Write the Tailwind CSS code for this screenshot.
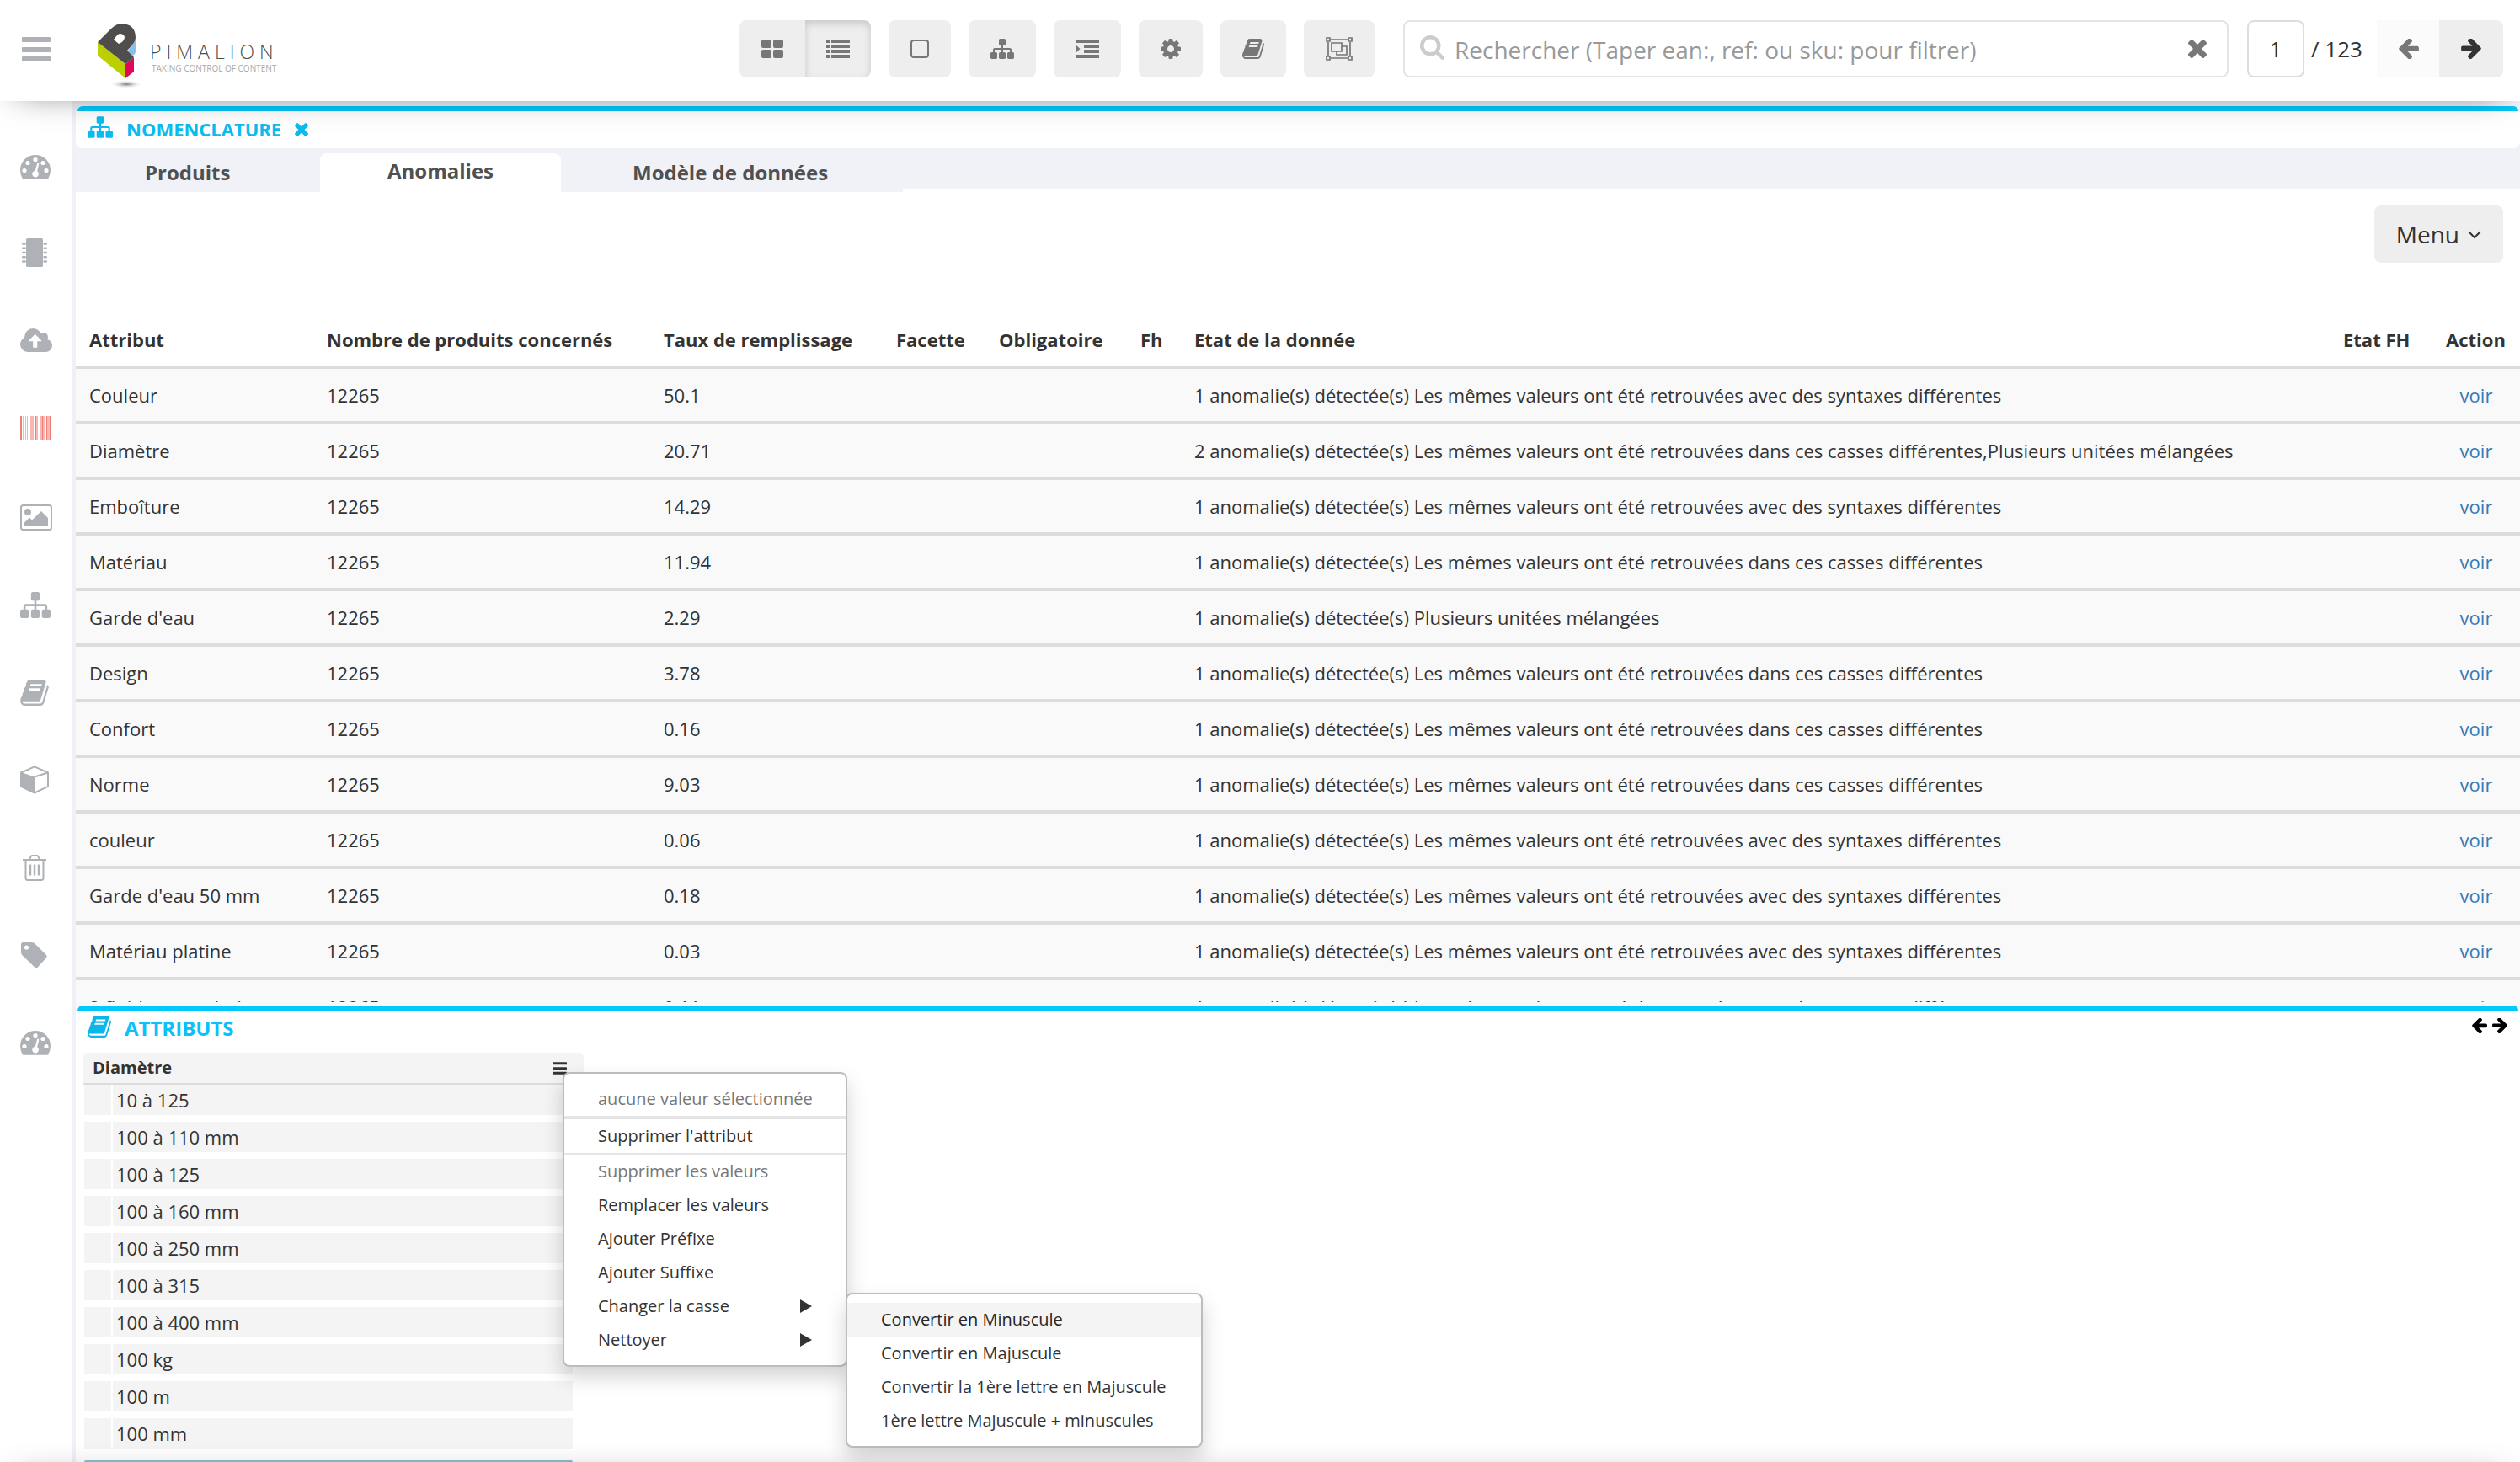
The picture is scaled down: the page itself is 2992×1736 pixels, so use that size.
<!DOCTYPE html>
<html lang="fr">
  <head>
    <meta charset="UTF-8" />
    <meta name="viewport" content="width=device-width, initial-scale=1.0" />
    <title>Pimalion - Nomenclature</title>
    <script src="https://cdn.jsdelivr.net/npm/@tailwindcss/browser@4"></script>
  </head>
  <body class="bg-white font-['Open_Sans','Noto_Sans',sans-serif] text-[22px] text-[#333]">
    <!-- icons -->
    <svg class="hidden">
      <symbol id="i-bars" viewBox="0 0 34 29">
        <rect width="34" height="6" rx="1" />
        <rect y="12" width="34" height="6" rx="1" />
        <rect y="23" width="34" height="6" rx="1" />
      </symbol>
      <symbol id="i-sitemap" viewBox="0 128 1792 1536">
        <path d="M1792 1248v320q0 40-28 68t-68 28h-320q-40 0-68-28t-28-68v-320q0-40 28-68t68-28h96v-192h-512v192h96q40 0 68 28t28 68v320q0 40-28 68t-68 28h-320q-40 0-68-28t-28-68v-320q0-40 28-68t68-28h96v-192h-512v192h96q40 0 68 28t28 68v320q0 40-28 68t-68 28h-320q-40 0-68-28t-28-68v-320q0-40 28-68t68-28h96v-192q0-52 38-90t90-38h512v-192h-96q-40 0-68-28t-28-68v-320q0-40 28-68t68-28h320q40 0 68 28t28 68v320q0 40-28 68t-68 28h-96v192h512q52 0 90 38t38 90v192h96q40 0 68 28t28 68z" />
      </symbol>
      <symbol id="i-book" viewBox="64 128 1666 1536">
        <path d="M1703 478q40 57 18 129l-275 906q-19 64-76.5 107.5t-122.5 43.5h-923q-77 0-148.5-53.5t-99.5-131.5q-24-67-2-127 0-4 3-27t4-37q1-8-3-21.5t-3-19.5q2-11 8-21t16.5-23.5 16.5-23.5q23-38 45-91.5t30-91.5q3-10 .5-30t-.5-28q3-11 17-28t17-23q21-36 42-92t25-90q1-9-2.5-32t.5-28q4-13 22-30.5t22-22.5q19-26 42.5-84.5t27.5-96.5q1-8-3-25.5t-2-26.5q2-8 9-18t18-23 17-21q8-12 16.5-30.5t15-35 16-36 19.5-32 26.5-23.5 36-11.5 47.5 5.5l-1 3q38-9 51-9h761q74 0 114 56t18 130l-274 906q-36 119-71.5 153.5t-128.5 34.5h-869q-27 0-38 15-11 16-1 43 24 70 144 70h923q29 0 56-15.5t35-41.5l300-987q7-22 5-57 38 15 59 43zm-1064 2q-4 13 2 22.5t20 9.5h608q13 0 25.5-9.5t16.5-22.5l21-64q4-13-2-22.5t-20-9.5h-608q-13 0-25.5 9.5t-16.5 22.5zm-83 256q-4 13 2 22.5t20 9.5h608q13 0 25.5-9.5t16.5-22.5l21-64q4-13-2-22.5t-20-9.5h-608q-13 0-25.5 9.5t-16.5 22.5z" />
      </symbol>
      <symbol id="i-times" viewBox="302 366 1188 1188">
        <path d="M1490 1322q0 40-28 68l-136 136q-28 28-68 28t-68-28l-294-294-294 294q-28 28-68 28t-68-28l-136-136q-28-28-28-68t28-68l294-294-294-294q-28-28-28-68t28-68l136-136q28-28 68-28t68 28l294 294 294-294q28-28 68-28t68 28l136 136q28 28 28 68t-28 68l-294 294 294 294q28 28 28 68z" />
      </symbol>
      <symbol id="i-left" viewBox="180 220 1490 1490">
        <path d="M1664 896v128q0 53-32.5 90.5t-84.5 37.5h-704l293 294q38 36 38 90t-38 90l-75 76q-37 37-90 37-52 0-91-37l-651-652q-37-37-37-90 0-52 37-91l651-650q38-38 91-38 52 0 90 38l75 74q38 38 38 91t-38 91l-293 293h704q52 0 84.5 37.5t32.5 90.5z" />
      </symbol>
      <symbol id="i-right" viewBox="120 240 1490 1490">
        <path d="M1600 960q0 54-37 91l-651 651q-39 37-91 37-51 0-90-37l-75-75q-38-38-38-91t38-91l293-293h-704q-52 0-84.5-37.5t-32.5-90.5v-128q0-53 32.5-90.5t84.5-37.5h704l-293-294q-38-36-38-90t38-90l75-75q38-38 90-38 53 0 91 38l651 651q37 35 37 90z" />
      </symbol>
      <symbol id="i-cog" viewBox="128 128 1536 1536">
        <path d="M1152 896q0-106-75-181t-181-75-181 75-75 181 75 181 181 75 181-75 75-181zm512-109v222q0 12-8 23t-20 13l-185 28q-19 54-39 91 35 50 107 138 10 12 10 25t-9 23q-27 37-99 108t-94 71q-12 0-26-9l-138-108q-44 23-91 38-16 136-29 186-7 28-36 28h-222q-14 0-24.5-8.5t-11.5-21.5l-28-184q-49-16-90-37l-141 107q-10 9-25 9-14 0-25-11-126-114-165-168-7-10-7-23 0-12 8-23 15-21 51-66.5t54-70.5q-27-50-41-99l-183-27q-13-2-21-12.5t-8-23.5v-222q0-12 8-23t19-13l186-28q14-46 39-92-40-57-107-138-10-12-10-24 0-10 9-23 26-36 98.5-107.5t94.5-71.5q13 0 26 10l138 107q44-23 91-38 16-136 29-186 7-28 36-28h222q14 0 24.5 8.5t11.5 21.5l28 184q49 16 90 37l142-107q9-9 24-9 13 0 25 10 129 119 165 170 7 8 7 22 0 12-8 23-15 21-51 66.5t-54 70.5q26 50 41 98l183 28q13 2 21 12.5t8 23.5z" />
      </symbol>
      <symbol id="i-search" viewBox="64 128 1664 1664">
        <path d="M1216 832q0-185-131.5-316.5t-316.5-131.5-316.5 131.5-131.5 316.5 131.5 316.5 316.5 131.5 316.5-131.5 131.5-316.5zm512 832q0 52-38 90t-90 38q-54 0-90-38l-343-342q-179 124-399 124-143 0-273.5-55.5t-225-150-150-225-55.5-273.5 55.5-273.5 150-225 225-150 273.5-55.5 273.5 55.5 225 150 150 225 55.5 273.5q0 220-124 399l343 343q37 37 37 90z" />
      </symbol>
      <symbol id="i-cloud" viewBox="0 128 1920 1408">
        <path d="M1280 864q0-14-9-23l-352-352q-9-9-23-9t-23 9l-351 351q-10 12-10 24 0 14 9 23t23 9h224v352q0 13 9.5 22.5t22.5 9.5h192q13 0 22.5-9.5t9.5-22.5v-352h224q13 0 22.5-9.5t9.5-22.5zm640 288q0 159-112.5 271.5t-271.5 112.5h-1088q-185 0-316.5-131.5t-131.5-316.5q0-130 70-240t188-165q-2-30-2-43 0-212 150-362t362-150q156 0 285.5 87t188.5 231q71-62 166-62 106 0 181 75t75 181q0 76-41 138 130 31 213.5 135.5t83.5 238.5z" />
      </symbol>
      <symbol id="i-gauge" viewBox="0 0 36 29">
        <path d="M18 0a18 18 0 0 1 18 18q0 5.500-2.700 10-.5.700-1.500.700H4.200q-1 0-1.500-.7Q0 23.500 0 18A18 18 0 0 1 18 0z" />
        <g fill="#fff">
          <circle cx="5" cy="18.500" r="2.600" />
          <circle cx="9" cy="9.500" r="2.600" />
          <circle cx="18" cy="5.500" r="2.600" />
          <circle cx="27" cy="9.500" r="2.600" />
          <circle cx="31" cy="18.500" r="2.600" />
          <path d="M20 10.500q.3-1.200 1.400-.9t.8 1.500l-2 8.200a3.900 3.900 0 1 1-2.400-.6z" />
        </g>
      </symbol>
      <symbol id="i-chip" viewBox="0 0 30 34">
        <rect x="5" width="20" height="34" rx="1.500" />
        <g stroke="currentColor" stroke-width="2.400" stroke-linecap="round">
          <path d="M1.200 6.500h2.500M1.200 11.700h2.500M1.200 17h2.500M1.200 22.200h2.500M1.200 27.500h2.500M26.600 6.500h2.200M26.600 11.700h2.200M26.600 17h2.200M26.600 22.200h2.200M26.600 27.500h2.200" />
        </g>
      </symbol>
      <symbol id="i-barcode" viewBox="0 0 36 28">
        <path opacity=".9" d="M0 0h2v28H0zM10 0h1v28h-1zM18 0h1v28h-1zM23 0h1v28h-1zM26 0h1v28h-1zM31 0h1v28h-1zM35 0h1v28h-1z" />
        <path opacity=".5" d="M3 0h1v28H3zM6 0h1v28H6zM8 0h1v28H8zM12 0h4v28h-4zM19 0h2v28h-2zM24 0h2v28h-2zM27 0h3v28h-3zM32 0h3v28h-3z" />
      </symbol>
      <symbol id="i-picture" viewBox="0 0 38 31">
        <rect x="1" y="1" width="36" height="29" rx="2.500" fill="none" stroke="currentColor" stroke-width="2" />
        <circle cx="9" cy="9" r="4" />
        <path d="M5 26v-4.500l6-6 3 3L25 8l8 8v10z" />
      </symbol>
      <symbol id="i-cube" viewBox="0 0 34 34">
        <path d="M1 8.500 17 1.300l16 7.200v16.300L17 32.500 1 24.800z" fill="none" stroke="currentColor" stroke-width="2" stroke-linejoin="round" />
        <path d="M1 8l16.800 5.700V33.500L1 25.500z" />
        <path d="M17 13.500 33 8.500" stroke="currentColor" stroke-width="2" />
      </symbol>
      <symbol id="i-trash" viewBox="0 0 28 31">
        <g fill="none" stroke="currentColor" stroke-width="2">
          <path d="M0 6h28M8 6l1.500-3.800Q10 1 11.200 1h5.600q1.200 0 1.700 1.200L20 6M3.500 6v21.500Q3.500 30 6 30h16q2.500 0 2.500-2.500V6" />
          <path d="M9 11.500v13M14 11.500v13M19 11.500v13" stroke-width="2.400" />
        </g>
      </symbol>
      <symbol id="i-tag" viewBox="0 0 31 31">
        <path fill-rule="evenodd" d="M2.500 0h10.300q2 0 3.700 1.500L30 15q1.300 1.600 0 3.200L19.600 29.800q-1.600 1.400-3.200 0L1.700 15.500Q0 13.800 0 11.800V2.500Q0 0 2.500 0zM6.500 3.500a2.600 2.600 0 1 0 0 5.200 2.600 2.600 0 0 0 0-5.200z" />
      </symbol>
      <symbol id="i-th" viewBox="0 0 26 22">
        <rect width="12" height="10" rx="2" /><rect x="14" width="12" height="10" rx="2" />
        <rect y="12" width="12" height="10" rx="2" /><rect x="14" y="12" width="12" height="10" rx="2" />
      </symbol>
      <symbol id="i-list" viewBox="0 0 28 22">
        <path d="M0 0h4v4H0zM6 0h22v4H6zM0 6h4v4H0zM6 6h22v4H6zM0 12h4v4H0zM6 12h22v4H6zM0 18h4v4H0zM6 18h22v4H6z" />
      </symbol>
      <symbol id="i-square" viewBox="0 0 22 22">
        <rect x="1" y="1" width="20" height="20" rx="3" fill="none" stroke="currentColor" stroke-width="2" />
      </symbol>
      <symbol id="i-indent" viewBox="0 0 28 22">
        <path d="M0 0h28v4H0zM10 6h18v4H10zM10 12h18v4H10zM0 18h28v4H0zM0 6l5.500 5L0 16z" />
      </symbol>
      <symbol id="i-group" viewBox="0 0 32 28">
        <g fill="none" stroke="currentColor" stroke-width="1.700">
          <path d="M6 3h20M6 25h20M3 6v16M29 6v16" />
          <path d="M1 1h4v4H1zM27 1h4v4h-4zM1 23h4v4H1zM27 23h4v4h-4z" />
          <path d="M7 7h12v10H7zM19 11h6v10H13v-4" />
        </g>
      </symbol>
      <symbol id="i-play" viewBox="0 0 14 16"><path d="M0 0l14 8-14 8z" /></symbol>
    </svg>

    <div class="flex h-screen flex-col overflow-hidden">
      <!-- header -->
      <header class="relative z-20 flex h-[120px] shrink-0 items-start bg-white pt-6 pr-5 shadow-[0_8px_40px_-20px_rgba(0,0,0,0.62)]">
        <div class="flex w-[878px] shrink-0">
          <button aria-label="Navigation" class="ml-[26px] h-[68px] text-[#aeb1b5]">
            <svg class="h-[29px] w-[34px] fill-current"><use href="#i-bars" /></svg>
          </button>
          <a href="#" class="ml-14 flex">
            <svg class="mt-1 h-[80px] w-[56px]" viewBox="0 0 56 80">
              <defs>
                <radialGradient id="ground">
                  <stop offset="0" stop-color="#777" />
                  <stop offset="1" stop-color="#fff" stop-opacity="0" />
                </radialGradient>
              </defs>
              <ellipse cx="34" cy="72" rx="20" ry="5" fill="url(#ground)" />
              <path d="M45 19v14q0 4-6 6l-5-4z" fill="#8cc0ea" />
              <path d="M0 22l33 26v17L0 38z" fill="#bccf00" />
              <path d="M33 48l10-8v17l-10 8z" fill="#e0085a" />
              <path fill-rule="evenodd" d="M0 22L16 6Q22 0 29 0q16 1 16 17 0 5-10 15l8 8-10 8zM19 19l6 5q7-3 7-8-1-4-6-4-2 0-7 7z" fill="#4f4e4d" />
            </svg>
            <span class="mt-[22px] ml-1.5 block">
              <span class="block text-[23px] leading-[30px] font-light tracking-[6px] text-[#4d4d4d]">PIMALION</span>
              <span class="block pl-0.5 text-[10px] leading-[10px] text-[#aaa]">TAKING CONTROL OF CONTENT</span>
            </span>
          </a>
        </div>

        <div class="flex shrink-0 gap-[21px] text-[#777]">
          <div class="flex overflow-hidden rounded-lg bg-[#eee]">
            <button aria-label="Grille" class="flex h-[68px] items-center px-[26px]"><svg class="h-[22px] w-[26px] fill-current"><use href="#i-th" /></svg></button>
            <button aria-label="Liste" class="flex h-[68px] items-center rounded-r-lg px-[25px] shadow-[inset_0_4px_10px_rgba(0,0,0,0.16)]"><svg class="h-[22px] w-[28px] fill-current"><use href="#i-list" /></svg></button>
          </div>
          <button aria-label="Sélection" class="flex h-[68px] items-center rounded-lg bg-[#eee] px-[26px]"><svg class="h-[22px] w-[22px] fill-current"><use href="#i-square" /></svg></button>
          <button aria-label="Nomenclature" class="flex h-[68px] items-center rounded-lg bg-[#eee] px-[26px]"><svg class="h-[24px] w-[28px] fill-current"><use href="#i-sitemap" /></svg></button>
          <button aria-label="Indenter" class="flex h-[68px] items-center rounded-lg bg-[#eee] px-[26px]"><svg class="h-[22px] w-[28px] fill-current"><use href="#i-indent" /></svg></button>
          <button aria-label="Paramètres" class="flex h-[68px] items-center rounded-lg bg-[#eee] px-[26px]"><svg class="h-[24px] w-[24px] fill-current"><use href="#i-cog" /></svg></button>
          <button aria-label="Attributs" class="flex h-[68px] items-center rounded-lg bg-[#eee] px-[26px]"><svg class="h-[24px] w-[26px] fill-current"><use href="#i-book" /></svg></button>
          <button aria-label="Grouper" class="flex h-[68px] items-center rounded-lg bg-[#eee] px-[26px]"><svg class="h-[28px] w-[32px] fill-current"><use href="#i-group" /></svg></button>
        </div>

        <form class="ml-[34px] flex h-[68px] flex-1 items-center rounded-lg border-2 border-[#e4e4e4] pr-6 pl-[18px]">
          <label for="search" aria-label="Rechercher" class="mb-1 text-[#ccc]"><svg class="h-[29px] w-[29px] fill-current"><use href="#i-search" /></svg></label>
          <input id="search" type="text" placeholder="Rechercher (Taper ean:, ref: ou sku: pour filtrer)" class="ml-3 h-full min-w-0 flex-1 pt-0.5 text-[28px] outline-none placeholder:text-[#999]" />
          <button type="button" aria-label="Effacer" class="text-[#777]"><svg class="h-[22px] w-[22px] fill-current"><use href="#i-times" /></svg></button>
        </form>

        <div class="ml-[22px] flex h-[68px] items-center text-[26px]">
          <input type="text" value="1" aria-label="Page" class="h-[68px] w-[68px] rounded-lg border-2 border-[#ddd] text-center" />
          <span class="ml-2 w-[78px]">/ 123</span>
          <button disabled aria-label="Page précédente" class="flex h-[68px] w-[74px] items-center justify-center bg-[#fbfbfb] pl-0.5 text-[#777]"><svg class="h-[24px] w-[24px] fill-current"><use href="#i-left" /></svg></button>
          <button aria-label="Page suivante" class="flex h-[68px] w-[76px] items-center justify-center rounded-r-lg bg-[#eee] text-[#333]"><svg class="h-[24px] w-[24px] fill-current"><use href="#i-right" /></svg></button>
        </div>
      </header>

      <div class="flex min-h-0 flex-1">
        <!-- sidebar -->
        <nav class="flex w-[90px] shrink-0 flex-col border-r-4 border-[#f0f1f8] pt-[26px] pl-6 text-[#aeb1b5]">
          <a href="#" aria-label="Tableau de bord" class="flex h-[104px] items-center"><svg class="h-[29px] w-[36px] fill-current"><use href="#i-gauge" /></svg></a>
          <a href="#" aria-label="Traitements" class="flex h-[104px] items-center pb-1 pl-0.5"><svg class="h-[34px] w-[30px] fill-current"><use href="#i-chip" /></svg></a>
          <a href="#" aria-label="Import" class="flex h-[104px] items-center pb-1"><svg class="h-[28px] w-[38px] fill-current"><use href="#i-cloud" /></svg></a>
          <a href="#" aria-label="Produits" class="flex h-[104px] items-center pb-1 text-[#ef6f68]"><svg class="h-[28px] w-[36px] fill-current"><use href="#i-barcode" /></svg></a>
          <a href="#" aria-label="Médias" class="flex h-[104px] items-center"><svg class="h-[31px] w-[38px] fill-current"><use href="#i-picture" /></svg></a>
          <a href="#" aria-label="Nomenclature" class="flex h-[104px] items-center"><svg class="h-[31px] w-[36px] fill-current"><use href="#i-sitemap" /></svg></a>
          <a href="#" aria-label="Attributs" class="flex h-[104px] items-center"><svg class="h-[31px] w-[34px] fill-current"><use href="#i-book" /></svg></a>
          <a href="#" aria-label="Catalogue" class="flex h-[104px] items-center"><svg class="h-[34px] w-[34px] fill-current"><use href="#i-cube" /></svg></a>
          <a href="#" aria-label="Corbeille" class="flex h-[104px] items-center pl-[3px]"><svg class="h-[31px] w-[28px] fill-current"><use href="#i-trash" /></svg></a>
          <a href="#" aria-label="Étiquettes" class="flex h-[104px] items-center pl-px"><svg class="h-[31px] w-[31px] fill-current"><use href="#i-tag" /></svg></a>
          <a href="#" aria-label="Statistiques" class="flex h-[104px] items-center"><svg class="h-[29px] w-[36px] fill-current"><use href="#i-gauge" /></svg></a>
        </nav>

        <main class="flex min-w-0 flex-1 flex-col">
          <!-- nomenclature -->
          <section class="flex min-h-0 flex-1 flex-col overflow-hidden">
            <div class="bg-[#f0f2f7] pt-1.5">
              <div class="mx-0.5 h-1.5 rounded-t-lg bg-[#00c8fb]"></div>
              <div class="flex h-11 items-center rounded-b-lg bg-white pb-0.5 pl-3.5 text-[#0bbcf0]">
                <svg class="mb-1 h-[26px] w-[30px] fill-current"><use href="#i-sitemap" /></svg>
                <h2 class="ml-4 font-bold">NOMENCLATURE</h2>
                <button aria-label="Fermer" class="mt-0.5 ml-4"><svg class="h-4 w-4 fill-current"><use href="#i-times" /></svg></button>
              </div>
            </div>
            <div class="flex shrink-0 items-start text-[24px] leading-[52px] font-bold text-[#505050]">
              <a href="#" class="h-[52px] w-[290px] bg-[#f0f2f7] pt-[3px] pl-[82px]">Produits</a>
              <div class="bg-[#f0f2f7] pt-1.5">
                <a href="#" class="block h-[46px] w-[286px] rounded-t-lg bg-white text-center leading-[42px]">Anomalies</a>
              </div>
              <a href="#" class="h-[52px] w-[406px] bg-[#f0f2f7] pt-[3px] pl-[85px]">Modèle de données</a>
              <div class="h-12 flex-1 bg-[#f0f2f7]"></div>
            </div>
            <div class="flex shrink-0 justify-end pt-4 pr-5">
              <button class="flex h-[68px] items-center gap-2.5 rounded-lg bg-[#eee] px-[26px] text-[28px]">
                Menu
                <svg class="mt-0.5 h-[10px] w-[16px]" viewBox="0 0 16 10" fill="none" stroke="currentColor" stroke-width="2"><path d="M1 1l7 7 7-7" /></svg>
              </button>
            </div>

            <table class="mt-[62px] w-full table-fixed border-collapse text-left">
              <colgroup>
                <col class="w-[282px]" />
                <col class="w-[400px]" />
                <col class="w-[276px]" />
                <col class="w-[122px]" />
                <col class="w-[168px]" />
                <col class="w-[64px]" />
                <col />
                <col class="w-[122px]" />
                <col class="w-[104px]" />
              </colgroup>
              <thead>
                <tr class="h-[62px] whitespace-nowrap">
                  <th class="pb-0.5 pl-4">Attribut</th>
                  <th class="pb-0.5 pl-4">Nombre de produits concernés</th>
                  <th class="pb-0.5 pl-4">Taux de remplissage</th>
                  <th class="pb-0.5 pl-4">Facette</th>
                  <th class="pb-0.5 pl-4">Obligatoire</th>
                  <th class="pb-0.5 pl-4">Fh</th>
                  <th class="pb-0.5 pl-4">Etat de la donnée</th>
                  <th class="pb-0.5 pl-4">Etat FH</th>
                  <th class="pb-0.5 pl-4">Action</th>
                </tr>
              </thead>
              <tbody id="anomalies"></tbody>
            </table>
          </section>

          <!-- attributs -->
          <section class="h-[546px] shrink-0 bg-white">
            <div class="bg-[#f8f8fb] px-0.5 pt-1">
              <div class="h-1.5 rounded-t-lg bg-[#00c8fb]"></div>
            </div>
            <div class="flex h-[42px] items-center pr-[15px] pl-3.5">
              <svg class="mb-1 h-[26px] w-[28px] fill-[#0bb6ea]"><use href="#i-book" /></svg>
              <h2 class="ml-4 text-[24px] font-bold text-[#0bc1f9]">ATTRIBUTS</h2>
              <div class="mb-1.5 ml-auto flex gap-1.5 text-black">
                <button aria-label="Précédent"><svg class="h-[18px] w-[18px] fill-current"><use href="#i-left" /></svg></button>
                <button aria-label="Suivant"><svg class="h-[18px] w-[18px] fill-current"><use href="#i-right" /></svg></button>
              </div>
            </div>

            <div class="relative mt-2 ml-2 w-[595px]">
              <div class="flex h-[38px] items-center justify-between rounded-t-md border-b-2 border-[#dcdcdc] bg-[#f4f4f4] pr-5 pl-3">
                <h3 class="text-[20px] font-bold">Diamètre</h3>
                <button aria-label="Actions"><svg class="h-[15px] w-[17px] fill-current"><use href="#i-bars" /></svg></button>
              </div>
              <ul id="values" class="ml-0.5 w-[580px] space-y-2"></ul>

              <!-- context menu -->
              <ul class="absolute top-[23px] left-[570px] w-[338px] rounded-lg border-2 border-[#bcbcbc] bg-white py-2.5 text-[20px] leading-10 shadow-[0_12px_24px_rgba(0,0,0,0.175)]">
                <li class="border-b-4 border-[#e5e5e5] pl-10 text-[#777]">aucune valeur sélectionnée</li>
                <li class="border-b-2 border-[#e5e5e5] pl-10">Supprimer l'attribut</li>
                <li class="pl-10 text-[#777]">Supprimer les valeurs</li>
                <li class="pl-10">Remplacer les valeurs</li>
                <li class="pl-10">Ajouter Préfixe</li>
                <li class="pl-10">Ajouter Suffixe</li>
                <li class="relative flex items-center justify-between px-10">
                  Changer la casse
                  <svg class="h-4 w-3.5 fill-current"><use href="#i-play" /></svg>
                  <ul class="absolute top-1 left-full w-[424px] rounded-lg border-2 border-[#bcbcbc] bg-white py-2.5 shadow-[0_12px_24px_rgba(0,0,0,0.175)]">
                    <li class="bg-[#f4f4f4] pl-10 text-[#262626]">Convertir en Minuscule</li>
                    <li class="pl-10">Convertir en Majuscule</li>
                    <li class="pl-10">Convertir la 1ère lettre en Majuscule</li>
                    <li class="pl-10">1ère lettre Majuscule + minuscules</li>
                  </ul>
                </li>
                <li class="flex items-center justify-between px-10">
                  Nettoyer
                  <svg class="h-4 w-3.5 fill-current"><use href="#i-play" /></svg>
                </li>
              </ul>
            </div>
          </section>
        </main>
      </div>
    </div>
    <footer class="fixed inset-x-0 -bottom-20 h-20 shadow-[0_0_40px_-20px_rgba(0,0,0,0.4)]"></footer>
    <div class="fixed bottom-0 left-[100px] h-0.5 w-[580px] rounded-t-sm bg-[#7fb4c4]"></div>

    <script>
      const syntaxes = "1 anomalie(s) détectée(s) Les mêmes valeurs ont été retrouvées avec des syntaxes différentes";
      const casses = "1 anomalie(s) détectée(s) Les mêmes valeurs ont été retrouvées dans ces casses différentes";
      const rows = [
        ["Couleur", "50.1", syntaxes],
        ["Diamètre", "20.71", "2 anomalie(s) détectée(s) Les mêmes valeurs ont été retrouvées dans ces casses différentes,Plusieurs unitées mélangées"],
        ["Emboîture", "14.29", syntaxes],
        ["Matériau", "11.94", casses],
        ["Garde d'eau", "2.29", "1 anomalie(s) détectée(s) Plusieurs unitées mélangées"],
        ["Design", "3.78", casses],
        ["Confort", "0.16", casses],
        ["Norme", "9.03", casses],
        ["couleur", "0.06", syntaxes],
        ["Garde d'eau 50 mm", "0.18", syntaxes],
        ["Matériau platine", "0.03", syntaxes],
        ["2 finitions au choix", "0.11", syntaxes],
      ];
      document.getElementById("anomalies").innerHTML = rows
        .map(
          ([name, rate, state]) => `
          <tr class="h-[66px] border-t-4 border-[#dcdcdc] bg-[#f9f9f9] whitespace-nowrap">
            <td class="pl-4">${name}</td>
            <td class="pl-4">12265</td>
            <td class="pl-4">${rate}</td>
            <td></td>
            <td></td>
            <td></td>
            <td class="pl-4">${state}</td>
            <td></td>
            <td class="text-center"><a href="#" class="text-[#337ab7]">voir</a></td>
          </tr>`
        )
        .join("");

      const values = ["10 à 125", "100 à 110 mm", "100 à 125", "100 à 160 mm", "100 à 250 mm", "100 à 315", "100 à 400 mm", "100 kg", "100 m", "100 mm"];
      document.getElementById("values").innerHTML = values
        .map(
          (value) => `
          <li class="flex h-9 gap-0.5 leading-9">
            <span class="w-8 bg-[#f4f4f4]"></span>
            <span class="flex-1 bg-[#f4f4f4] pl-1">${value}</span>
          </li>`
        )
        .join("");
    </script>
  </body>
</html>
